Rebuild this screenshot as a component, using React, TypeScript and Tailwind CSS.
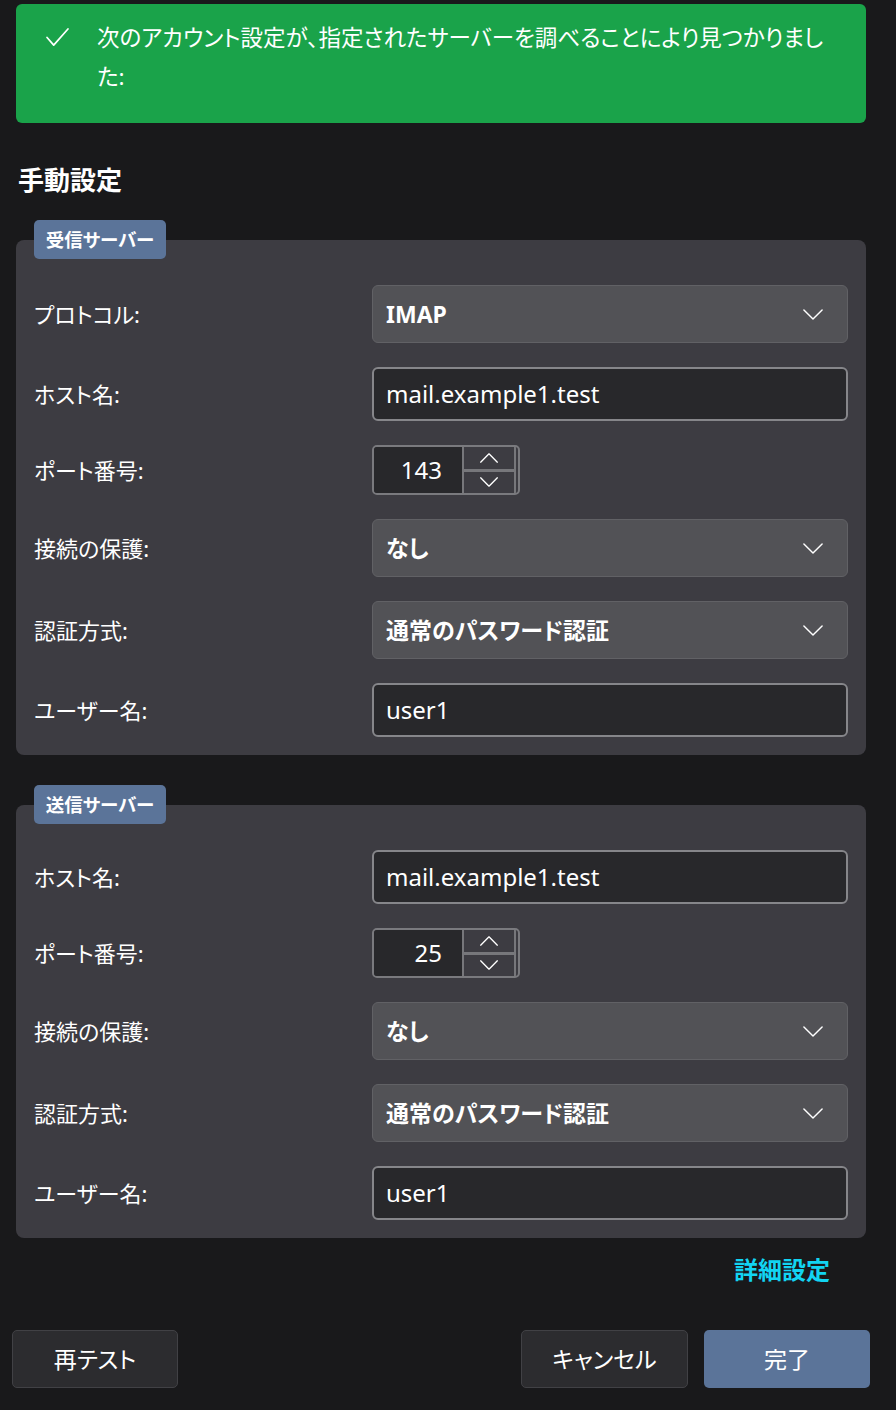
import type { ReactNode } from 'react';

// ─── Bits ─────────────────────────────────────────────────────────────────────

function Chevron({ up = false, className = '' }: { up?: boolean; className?: string }) {
  return (
    <svg viewBox="0 0 22 12" className={className} fill="none" stroke="currentColor" strokeWidth={1.6} strokeLinecap="round" strokeLinejoin="round">
      {up ? <path d="M1 11 L11 1 L21 11" /> : <path d="M1 1 L11 11 L21 1" />}
    </svg>
  );
}

function Select({ value }: { value: string }) {
  return (
    <div className="flex h-[58px] items-center justify-between rounded-[6px] border border-[#616165] bg-[#525256] pl-[13px] pr-[24px]">
      <span className="text-[23px] font-bold text-white">{value}</span>
      <Chevron className="h-[11px] w-[20px] text-white" />
    </div>
  );
}

function TextInput({ value }: { value: string }) {
  return (
    <div className="flex h-[54px] items-center rounded-[6px] border-2 border-[#86868a] bg-[#28282b] pl-[12px]">
      <span className="text-[24px] text-white">{value}</span>
    </div>
  );
}

function Spinner({ value }: { value: string }) {
  return (
    <div className="flex h-[50px] w-[148px] overflow-hidden rounded-[5px] border-2 border-[#7a7a7e] bg-[#3d3c42]">
      <div className="flex w-[88px] items-center justify-end bg-[#28282b] pr-[20px] text-[24px] text-white">{value}</div>
      <div className="flex w-[52px] flex-col border-l-2 border-[#77777b]">
        <div className="flex flex-1 items-center justify-center border-b-[3px] border-[#77777b]">
          <Chevron up className="h-[10px] w-[20px] text-white" />
        </div>
        <div className="flex flex-1 items-center justify-center">
          <Chevron className="h-[10px] w-[20px] text-white" />
        </div>
      </div>
      <div className="flex-1 border-l-2 border-[#77777b]" />
    </div>
  );
}

function Row({ label, children }: { label: string; children: ReactNode }) {
  return (
    <div className="grid grid-cols-[338px_1fr] items-center">
      <span className="text-[22px] text-white">{label}</span>
      <div>{children}</div>
    </div>
  );
}

function Section({ title, children }: { title: string; children: ReactNode }) {
  return (
    <div className="flex flex-col">
      <div className="relative z-10 ml-[18px] flex h-[39px] w-[132px] items-center justify-center rounded-[5px] bg-[#5b7499]">
        <span className="text-[18.5px] font-bold text-white">{title}</span>
      </div>
      <div className="-mt-[19px] flex flex-col gap-[24px] rounded-[8px] bg-[#3d3c42] px-[18px] pb-[18px] pt-[45px]">
        {children}
      </div>
    </div>
  );
}

// ─── Page ─────────────────────────────────────────────────────────────────────

export default function App() {
  return (
    <div className="h-[1410px] w-[896px] bg-[#19191b] font-['Noto_Sans','Noto_Sans_CJK_JP',sans-serif] text-white [font-feature-settings:'palt']">
      <div className="pl-4 pr-[30px] pt-1">
        <div className="flex h-[119px] items-start rounded-[6px] bg-[#1aa34a] pl-[30px] pt-[14px]">
          <svg viewBox="0 0 24 20" className="mt-[10px] h-[19px] w-[23px] shrink-0" fill="none" stroke="white" strokeWidth={1.8} strokeLinecap="round" strokeLinejoin="round">
            <path d="M1 10 L8 18 L23 1" />
          </svg>
          <p className="ml-[28px] w-[745px] text-[22.5px] leading-[39px] text-white">
            次のアカウント設定が、指定されたサーバーを調べることにより見つかりました:
          </p>
        </div>

        <h2 className="mt-[39px] pl-[2px] text-[26px] font-bold leading-[36px]">手動設定</h2>

        <div className="mt-[22px] flex flex-col gap-[30px]">
          <Section title="受信サーバー">
            <Row label="プロトコル:"><Select value="IMAP" /></Row>
            <Row label="ホスト名:"><TextInput value="mail.example1.test" /></Row>
            <Row label="ポート番号:"><Spinner value="143" /></Row>
            <Row label="接続の保護:"><Select value="なし" /></Row>
            <Row label="認証方式:"><Select value="通常のパスワード認証" /></Row>
            <Row label="ユーザー名:"><TextInput value="user1" /></Row>
          </Section>

          <Section title="送信サーバー">
            <Row label="ホスト名:"><TextInput value="mail.example1.test" /></Row>
            <Row label="ポート番号:"><Spinner value="25" /></Row>
            <Row label="接続の保護:"><Select value="なし" /></Row>
            <Row label="認証方式:"><Select value="通常のパスワード認証" /></Row>
            <Row label="ユーザー名:"><TextInput value="user1" /></Row>
          </Section>
        </div>

        <div className="mt-[17px] flex justify-end pr-[36px]">
          <span className="text-[24px] font-bold leading-[30px] text-[#12d4f2]">詳細設定</span>
        </div>
      </div>

      <div className="mt-[45px] flex items-center pl-[12px] pr-[26px]">
        <button className="h-[58px] w-[166px] rounded-[5px] border border-[#414145] bg-[#2c2c2f] text-[23px] text-white">再テスト</button>
        <div className="flex-1" />
        <button className="h-[58px] w-[167px] rounded-[5px] border border-[#414145] bg-[#2c2c2f] text-[23px] text-white">キャンセル</button>
        <button className="ml-[16px] h-[58px] w-[166px] rounded-[5px] bg-[#5b7499] text-[23px] text-white">完了</button>
      </div>
    </div>
  );
}
